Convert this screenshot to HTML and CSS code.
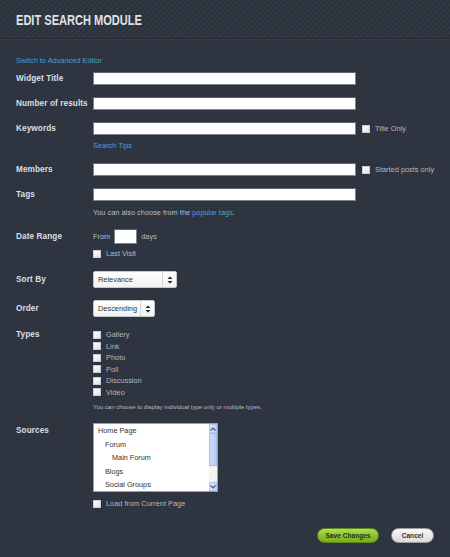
FILE: index.html
```html
<!DOCTYPE html>
<html>
<head>
<meta charset="utf-8">
<link rel="stylesheet" href="styles.css">
</head>
<body>
<div class="header"><h1 class="title">EDIT SEARCH MODULE</h1></div>
<div class="content">
  <a class="link switch">Switch to Advanced Editor</a>

  <div class="row r-widget">
    <div class="label">Widget Title</div>
    <div class="field"><span class="input"></span></div>
  </div>

  <div class="row r-gap">
    <div class="label">Number of results</div>
    <div class="field"><span class="input"></span></div>
  </div>

  <div class="row r-gap">
    <div class="label">Keywords</div>
    <div class="field">
      <div class="inline"><span class="input"></span><span class="check side"></span><span class="text">Title Only</span></div>
      <a class="link line tips">Search Tips</a>
    </div>
  </div>

  <div class="row r-gap">
    <div class="label">Members</div>
    <div class="field">
      <div class="inline"><span class="input"></span><span class="check side"></span><span class="text">Started posts only</span></div>
    </div>
  </div>

  <div class="row r-gap">
    <div class="label">Tags</div>
    <div class="field">
      <span class="input"></span>
      <div class="line note help">You can also choose from the <a class="link">popular tags</a>.</div>
    </div>
  </div>

  <div class="row r-date">
    <div class="label label-date">Date Range</div>
    <div class="field">
      <div class="inline"><span class="text">From</span><span class="input small"></span><span class="text">days</span></div>
      <div class="line opt lastvisit"><span class="check"></span><span class="text">Last Visit</span></div>
    </div>
  </div>

  <div class="row r-sel">
    <div class="label label-sel">Sort By</div>
    <div class="field"><div class="select sel-sort"><span class="sel-text">Relevance</span><span class="sel-arrow"><svg width="6" height="8" viewBox="0 0 6 8"><path d="M3 0.5L5.5 3H0.5Z M3 7.5L5.5 5H0.5Z" fill="#222"/></svg></span></div></div>
  </div>

  <div class="row r-sel2">
    <div class="label label-sel">Order</div>
    <div class="field"><div class="select sel-order"><span class="sel-text">Descending</span><span class="sel-arrow"><svg width="6" height="8" viewBox="0 0 6 8"><path d="M3 0.5L5.5 3H0.5Z M3 7.5L5.5 5H0.5Z" fill="#222"/></svg></span></div></div>
  </div>

  <div class="row r-types">
    <div class="label label-types">Types</div>
    <div class="field">
      <div class="types">
        <div class="opt"><span class="check"></span><span class="text">Gallery</span></div>
        <div class="opt"><span class="check"></span><span class="text">Link</span></div>
        <div class="opt"><span class="check"></span><span class="text">Photo</span></div>
        <div class="opt"><span class="check"></span><span class="text">Poll</span></div>
        <div class="opt"><span class="check"></span><span class="text">Discussion</span></div>
        <div class="opt"><span class="check"></span><span class="text">Video</span></div>
      </div>
      <div class="tiny">You can choose to display individual type only or multiple types.</div>
    </div>
  </div>

  <div class="row r-sources">
    <div class="label label-src">Sources</div>
    <div class="field">
      <div class="listbox">
        <div class="items">
          <div class="item">Home Page</div>
          <div class="item ind1">Forum</div>
          <div class="item ind2">Main Forum</div>
          <div class="item ind1">Blogs</div>
          <div class="item ind1">Social Groups</div>
        </div>
        <div class="scroll">
          <span class="sbtn"><svg width="6" height="4" viewBox="0 0 6 4"><path d="M0.5 3.5L3 1L5.5 3.5" fill="none" stroke="#3a5aa8" stroke-width="1.2"/></svg></span>
          <span class="thumb"></span>
          <span class="track"></span>
          <span class="sbtn"><svg width="6" height="4" viewBox="0 0 6 4"><path d="M0.5 0.5L3 3L5.5 0.5" fill="none" stroke="#3a5aa8" stroke-width="1.2"/></svg></span>
        </div>
      </div>
      <div class="line opt load"><span class="check"></span><span class="text">Load from Current Page</span></div>
    </div>
  </div>

  <div class="actions">
    <span class="btn save">Save Changes</span>
    <span class="btn cancel">Cancel</span>
  </div>
</div>
</body>
</html>
```

FILE: styles.css
```css
html, body {
  margin: 0;
  padding: 0;
}
body {
  background: #2f3540;
  font-family: "Liberation Sans", Arial, sans-serif;
  width: 450px;
  height: 557px;
  overflow: hidden;
}
.header {
  height: 39px;
  box-sizing: border-box;
  border-bottom: 1px solid #262b33;
  box-shadow: 0 1px 0 #363c47;
  background: repeating-linear-gradient(135deg, #333944 0 2px, #2c323c 2px 4px);
  display: flex;
  align-items: center;
  padding: 0 16px;
}
.title {
  margin: 0;
  font-weight: bold;
  font-size: 14px;
  color: #dfe2e7;
  padding-top: 1px;
  white-space: nowrap;
  transform: scaleX(0.79);
  transform-origin: left center;
}
.content {
  padding: 0 16px;
}
.link {
  color: #3ea3d6;
  text-decoration: none;
}
.switch {
  display: block;
  margin-top: 17px;
  font-size: 7.4px;
  line-height: 10px;
}
.row {
  display: flex;
  align-items: flex-start;
}
.r-widget { margin-top: 6px; }
.r-gap { margin-top: 12px; }
.r-date { margin-top: 11px; }
.r-sel { margin-top: 12px; }
.r-sel2 { margin-top: 12px; }
.r-types { margin-top: 12px; }
.r-sources { margin-top: 11px; }
.label {
  width: 77px;
  flex: none;
  font-weight: bold;
  font-size: 8.2px;
  line-height: 13px;
  color: #dcdfe5;
  letter-spacing: 0.1px;
  white-space: nowrap;
}
.label-date { line-height: 15px; }
.label-sel { line-height: 17px; }
.label-types { line-height: 11px; }
.label-src { line-height: 16px; }
.field {
  display: flex;
  flex-direction: column;
  align-items: flex-start;
  white-space: nowrap;
}
.inline {
  display: flex;
  align-items: center;
}
.input {
  display: block;
  width: 263px;
  height: 13px;
  box-sizing: border-box;
  background: #fff;
  border: 1px solid #7d838c;
  border-top-color: #5e646d;
  flex: none;
}
.input.small {
  width: 23px;
  height: 15px;
  margin: 0 4px 0 4px;
}
.text {
  font-size: 7.4px;
  color: #b3b8bf;
  line-height: 10px;
  white-space: nowrap;
}
.check {
  display: inline-block;
  width: 8px;
  height: 8px;
  box-sizing: border-box;
  border: 1px solid #c9ced6;
  background: linear-gradient(135deg, #ffffff, #dfe3ea);
  flex: none;
  margin-right: 5px;
}
.check.side {
  margin-left: 6px;
}
.line {
  font-size: 7.4px;
  line-height: 10px;
}
.tips { margin-top: 6px; display: block; }
.note { color: #b7bcc4; }
.help { margin-top: 7px; }
.opt {
  display: flex;
  align-items: center;
}
.lastvisit { margin-top: 5px; }
.select {
  display: flex;
  height: 17px;
  box-sizing: border-box;
  border: 1px solid #c4c7cc;
  border-radius: 2px;
  background: linear-gradient(#ffffff, #f1f1f1);
  align-items: stretch;
}
.sel-sort { width: 84px; }
.sel-order { width: 62px; }
.sel-text {
  flex: 1;
  font-size: 7.4px;
  color: #333;
  line-height: 15px;
  padding-left: 4px;
  white-space: nowrap;
  overflow: hidden;
}
.sel-arrow {
  width: 13px;
  flex: none;
  border-left: 1px solid #d6d8dc;
  display: flex;
  align-items: center;
  justify-content: center;
}
.types .opt {
  height: 11.5px;
}
.types .text {
  line-height: 11.5px;
}
.tiny {
  margin-top: 4px;
  font-size: 6px;
  line-height: 10px;
  color: #b7bcc4;
}
.listbox {
  width: 125px;
  height: 69px;
  box-sizing: border-box;
  border: 1px solid #9aa0a8;
  background: #fff;
  display: flex;
}
.items {
  flex: 1;
}
.item {
  font-size: 7.3px;
  line-height: 13.6px;
  color: #333;
  padding-left: 4px;
  white-space: nowrap;
}
.item.ind1 { padding-left: 11px; }
.item.ind2 { padding-left: 18px; }
.scroll {
  width: 8px;
  flex: none;
  display: flex;
  flex-direction: column;
  background: #eeeee8;
}
.sbtn {
  height: 9px;
  flex: none;
  background: linear-gradient(90deg, #dbe5fb, #c3d3f6);
  border: 1px solid #b7c7ea;
  box-sizing: border-box;
  display: flex;
  align-items: center;
  justify-content: center;
}
.thumb {
  height: 33px;
  flex: none;
  background: linear-gradient(90deg, #cddbfa, #b8cbf5);
  border: 1px solid #a9bde9;
  box-sizing: border-box;
}
.track {
  flex: 1;
  background: #f3f3ee;
}
.load { margin-top: 7px; }
.actions {
  margin-top: 19px;
  display: flex;
  justify-content: flex-end;
  gap: 12px;
}
.btn {
  display: block;
  height: 15px;
  box-sizing: border-box;
  border-radius: 8px;
  font-size: 6.6px;
  font-weight: bold;
  line-height: 13px;
  text-align: center;
}
.save {
  width: 62px;
  background: linear-gradient(#b4dd55, #8cbf2e 55%, #79ad22);
  border: 1px solid #5c8a1c;
  color: #26340d;
}
.cancel {
  width: 43px;
  background: linear-gradient(#f8f8f8, #dcdcdc);
  border: 1px solid #9b9b9b;
  color: #333;
}
```
